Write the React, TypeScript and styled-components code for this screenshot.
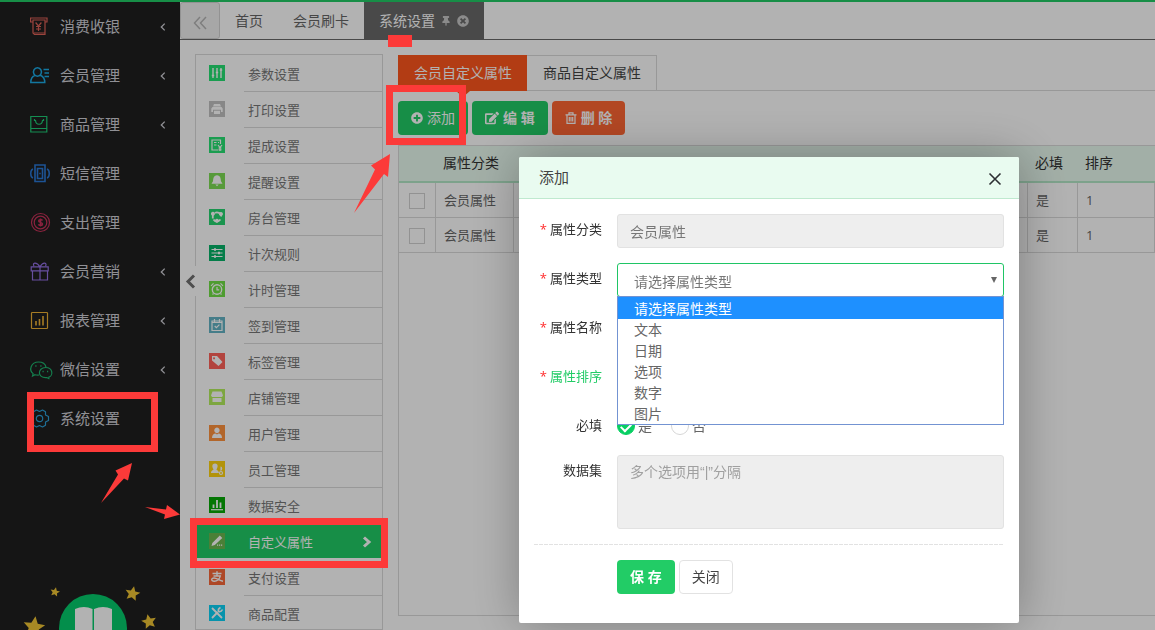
import React from 'react';
import styled, { createGlobalStyle, css } from 'styled-components';
import { FaPlusCircle, FaEdit, FaTimesCircle, FaThumbtack } from 'react-icons/fa';

const green = '#22cc66';
const line = '#dadada';
const mark = '#fc3a39';

const GlobalStyle = createGlobalStyle`
  * { box-sizing: border-box; }
  body {
    margin: 0;
    background: #fff;
    color: #666;
    font-family: "Open Sans", "Noto Sans CJK SC", sans-serif;
    font-size: 14px;
    line-height: 20px;
    overflow: hidden;
  }
  button, input, select, textarea { font: inherit; color: inherit; margin: 0; }
  button { cursor: pointer; }
  a { color: inherit; text-decoration: none; }
  ul { list-style: none; margin: 0; padding: 0; }
`;

const Page = styled.div`
  display: flex;
  position: relative;
  height: 100vh;
  overflow: hidden;
  border-top: 2px solid ${green};
`;

/* ---------- primary sidebar ---------- */

const Sidebar = styled.nav`
  display: flex;
  flex-direction: column;
  flex: none;
  width: 180px;
  background: #1f1f1f;
  color: #cfcfd6;
`;

const SideLink = styled.a`
  display: flex;
  align-items: center;
  gap: 10px;
  height: 49px;
  padding: 0 14px 0 30px;
  font-size: 15px;
`;

const SideLabel = styled.span`
  flex: 1;
  padding-bottom: 2px;
`;

const SideIcon = styled.svg`
  width: 20px;
  height: 20px;
  flex: none;
  fill: none;
  stroke: currentColor;
  stroke-width: 1.2;
  overflow: visible;
`;

const Brand = styled.svg`
  display: block;
  width: 180px;
  height: 50px;
  margin-top: auto;
`;

/* ---------- workspace ---------- */

const Workspace = styled.div`
  display: flex;
  flex-direction: column;
  flex: 1;
  min-width: 0;
`;

const TabBar = styled.div`
  display: flex;
  flex: none;
  height: 38px;
  border-bottom: 1px solid #696969;
`;

const CollapseButton = styled.button`
  display: flex;
  align-items: center;
  justify-content: center;
  width: 40px;
  padding: 4px 0 0;
  border: 1px solid #d2d2d2;
  border-radius: 3px;
  background: #f0f0f0;
  color: #b5b5b5;
`;

const PageTab = styled.a<{ $active?: boolean }>`
  display: flex;
  align-items: center;
  padding: 0 15px;
  ${(p) => p.$active && css`background: #696969; color: #fff;`}
`;

const TabTools = styled.span`
  display: flex;
  align-items: center;
  gap: 6px;
  margin-left: 6px;
  color: #c8c8c8;
`;

const Content = styled.div`
  display: flex;
  flex: 1;
  min-height: 0;
  padding: 14px 0 0 15px;
  position: relative;
`;

const Handle = styled.button`
  position: absolute;
  left: 5px;
  top: 226px;
  width: 12px;
  height: 30px;
  padding: 0;
  border: 0;
  background: #fff;
  color: #707070;
  display: flex;
  align-items: center;
  justify-content: center;
`;

const Menu = styled.ul`
  flex: none;
  width: 188px;
  padding-top: 1px;
  border: 1px solid ${line};
  font-size: 13px;
  color: #777;
`;

const MenuLink = styled.a<{ $active?: boolean }>`
  display: flex;
  align-items: center;
  height: 36px;
  padding-left: 13px;
  ${(p) => p.$active && css`
    background: ${green};
    color: #fff;
    box-shadow: inset 0 -2px #fff;
  `}
`;

const MenuText = styled.span<{ $active?: boolean }>`
  display: flex;
  align-items: center;
  justify-content: space-between;
  flex: 1;
  height: 36px;
  margin-left: 19px;
  padding: 1px 10px 0 4px;
  border-bottom: 1px solid ${(p) => (p.$active ? '#fff' : line)};
`;

const MenuIcon = styled.svg<{ $tone: string }>`
  width: 16px;
  height: 16px;
  flex: none;
  margin-bottom: 2px;
  background: ${(p) => p.$tone};
  fill: none;
  stroke: #fff;
  stroke-width: 1.2;
`;

const Main = styled.main`
  display: flex;
  flex-direction: column;
  flex: 1;
  min-width: 0;
  margin: 1px 0 14px 15px;
`;

const SubTabs = styled.div`
  display: flex;
  flex: none;
  height: 36px;
  border-bottom: 1px solid ${line};
`;

const SubTab = styled.a<{ $active?: boolean }>`
  position: relative;
  display: flex;
  align-items: center;
  padding: 0 15px 0 16px;
  color: #444;
  border: solid ${line};
  border-width: 1px 1px 0 0;
  ${(p) => p.$active && css`
    margin-bottom: -1px;
    border: 0;
    background: #ff571d;
    color: #fff;
    &::after {
      content: '';
      position: absolute;
      top: 100%;
      left: calc(50% - 7px);
      border: solid transparent;
      border-width: 6px 7px 0;
      border-top-color: #ff571d;
    }
  `}
`;

const Toolbar = styled.div`
  display: flex;
  flex: none;
  gap: 4px;
  padding: 10px 0;
`;

const Button = styled.button<{ $kind?: 'primary' | 'danger' | 'plain'; $bold?: boolean }>`
  display: inline-flex;
  align-items: center;
  justify-content: center;
  gap: 4px;
  height: 34px;
  padding: 0 13px;
  border: 0;
  border-radius: 4px;
  white-space: nowrap;
  font-weight: ${(p) => (p.$bold ? 700 : 400)};
  color: #fff;
  background: ${(p) => (p.$kind === 'danger' ? '#ff6633' : green)};
  ${(p) => p.$kind === 'plain' && css`
    padding: 0 12px;
    background: #fff;
    border: 1px solid #e2e2e2;
    color: #444;
    font-weight: 400;
  `}
`;

const TableBox = styled.div`
  flex: 1;
  min-height: 0;
  border: solid ${line};
  border-width: 1px 0 1px 1px;
`;

const Table = styled.table`
  width: 100%;
  table-layout: fixed;
  border-collapse: separate;
  border-spacing: 0;
  th, td { padding: 0 7px; text-align: left; }
  th {
    height: 37px;
    padding-bottom: 2px;
    background: #e9fbf0;
    border-bottom: 2px solid #b4e8c8;
    color: #333;
    font-weight: 400;
  }
  td {
    height: 35px;
    padding-left: 8px;
    border: solid ${line};
    border-width: 0 1px 1px 0;
    font-size: 13px;
  }
`;

const RowCheck = styled.input`
  appearance: none;
  display: block;
  width: 16px;
  height: 16px;
  margin: 1px 0 0 2px;
  border: 1px solid #d2d2d2;
  background: #fff;
`;

/* ---------- dialog ---------- */

const Shade = styled.div`
  position: fixed;
  inset: 0;
  display: flex;
  justify-content: center;
  align-items: flex-start;
  padding: 157px 0 0 383px;
  background: rgba(0, 0, 0, 0.3);
`;

const Dialog = styled.section`
  width: 500px;
  background: #fff;
  border-radius: 2px;
  box-shadow: 1px 1px 50px rgba(0, 0, 0, 0.3);
`;

const DialogHead = styled.header`
  display: flex;
  align-items: center;
  justify-content: space-between;
  height: 42px;
  padding: 0 17px 0 20px;
  border-bottom: 1px solid #bfe9cf;
  background: #e9fbf0;
  border-radius: 2px 2px 0 0;
  color: #444;
`;

const DialogTitle = styled.h2`
  margin: 0;
  padding-bottom: 2px;
  font-size: 15px;
  font-weight: 400;
`;

const CloseButton = styled.button`
  display: flex;
  padding: 3px 0 0;
  border: 0;
  background: none;
  color: #2d2f33;
`;

const Form = styled.form`
  display: flex;
  flex-direction: column;
  gap: 15px;
  padding: 15px 15px 29px;
`;

const Row = styled.div`
  display: grid;
  grid-template-columns: 68px 1fr;
  column-gap: 15px;
  position: relative;
`;

const Label = styled.label<{ $accent?: boolean }>`
  line-height: 30px;
  font-size: 13px;
  text-align: right;
  white-space: nowrap;
  color: ${(p) => (p.$accent ? green : '#333')};
`;

const Star = styled.span`
  margin-right: 3px;
  color: #ff2a2a;
`;

const field = css`
  width: 100%;
  height: 34px;
  border: 1px solid #e2e2e2;
  border-radius: 3px;
  padding: 0 12px;
  background: #fff;
  color: #777;
  outline: 0;
`;

const TextInput = styled.input`
  ${field}
  &:disabled { background: #eee; color: #777; }
`;

const TextArea = styled.textarea`
  ${field}
  display: block;
  height: 74px;
  padding: 6px 12px;
  background: #eee;
  font-family: "Liberation Sans", "Noto Sans CJK SC", sans-serif;
  resize: none;
  &::placeholder { color: #a0a0a0; opacity: 1; }
`;

const SelectBox = styled.div`
  position: relative;
`;

const Select = styled.select`
  ${field}
  appearance: none;
  display: block;
  padding: 3px 16px 0;
  border-color: #1fc565;
`;

const Arrow = styled.svg`
  position: absolute;
  right: 7px;
  top: 14px;
  fill: #666;
  pointer-events: none;
`;

const Options = styled.ul`
  position: absolute;
  z-index: 2;
  top: 33px;
  left: 0;
  right: 0;
  border: 1px solid #7393d2;
  background: #fff;
`;

const Option = styled.li<{ $active?: boolean }>`
  padding: 0 16px;
  line-height: 21px;
  ${(p) => p.$active && css`
    padding-top: 1px;
    background: #1e90ff;
    color: #fff;
  `}
`;

const Radios = styled.div`
  display: flex;
  align-items: center;
  gap: 19px;
  height: 30px;
`;

const RadioLabel = styled.label`
  display: flex;
  align-items: center;
  gap: 3px;
  padding-top: 2px;
`;

const Radio = styled.input`
  appearance: none;
  width: 18px;
  height: 18px;
  border: 1px solid #d6d6d6;
  border-radius: 50%;
  display: grid;
  place-items: center;
  &:checked { background: #08cf63; border-color: #08cf63; }
  &:checked::before {
    content: '';
    width: 8px;
    height: 5px;
    border: solid #fff;
    border-width: 0 0 2px 2px;
    rotate: -45deg;
  }
`;

const Divider = styled.hr`
  width: 100%;
  height: 1px;
  margin: 0;
  border: 0;
  background: repeating-linear-gradient(90deg, #e2e2e2 0 4px, transparent 4px 5px);
`;

const Actions = styled.div`
  display: flex;
  gap: 4px;
  padding-left: 83px;
`;

/* ---------- guide marks over the page ---------- */

const Frame = styled.div<{ $x: number; $y: number; $w: number; $h: number; $solid?: boolean }>`
  position: fixed;
  left: ${(p) => p.$x}px;
  top: ${(p) => p.$y}px;
  width: ${(p) => p.$w}px;
  height: ${(p) => p.$h}px;
  border: ${(p) => (p.$solid ? 0 : 7)}px solid ${mark};
  background: ${(p) => (p.$solid ? mark : 'transparent')};
  pointer-events: none;
`;

const Arrows = styled.svg`
  position: fixed;
  left: 0;
  top: 0;
  width: 400px;
  height: 530px;
  fill: ${mark};
  pointer-events: none;
`;

type Entry = { label: string; tone: string; icon: React.ReactNode; more?: boolean };

const sections: Entry[] = [
  { label: '消费收银', tone: '#df6258', more: true, icon: <><path d="M3 5H.6V1H17v4h-2.4M3 3h12v14.5H4.500L3 16z" /><path d="M5.600 5.500 8.500 9l2.900-3.500M8.500 9v5M6 9.500h5M6 12h5" /><path d="M4 16h11" strokeWidth="2" opacity=".5" /></> },
  { label: '会员管理', tone: '#1cabe6', more: true, icon: <path strokeWidth="1.500" d="M7.500 1.800a4 4.200 0 1 1-.1 0zM5 9.300C2 10.500 .8 13 .8 16.500h14c0-3.500-1.500-6-4.500-7.200M13.500 3.500h5.500M14.500 7h4.500M14.500 10.500h4.500" /> },
  { label: '商品管理', tone: '#1fcc76', more: true, icon: <path d="M.8 1.500h16v15.500h-16zM.8 13.500h16M4.500 4v1.500h1C6 10.500 12 10.500 12.500 5.500h1V4" /> },
  { label: '短信管理', tone: '#2a78d6', icon: <><path strokeWidth="1.600" d="M5 1h10v16.500H5zM7.500 4.500h5v10h-5z" /><path strokeWidth="1.500" d="M3 5C0 6 0 13 3 14M17 5c3 1 3 8 0 9M9.300 9.500h1.400" /></> },
  { label: '支出管理', tone: '#c8325a', icon: <><circle cx="10.500" cy="9.500" r="9" /><circle cx="10.500" cy="9.500" r="6.300" /><path strokeWidth="1.500" d="M12.500 7.500C12 6 8.700 6 8.700 8c0 1.700 3.800 1 3.800 3 0 2-3.500 2-4 .3M10.500 5.500v8" /></> },
  { label: '会员营销', tone: '#9471e6', more: true, icon: <path d="M1.200 4.800h17v4h-17zM2.500 8.800V18h15V8.800M10 4.800v13.200M10 4.800C6-1 2 1 4 4M10 4.800C13.500-1 17.500 1 15.500 4" /> },
  { label: '报表管理', tone: '#eeb234', more: true, icon: <><rect x="1.500" y="1.500" width="16" height="16" rx=".8" /><path strokeWidth="1.600" d="M6 10v4.500M9.500 8v6.500M13 5v9.500" /></> },
  { label: '微信设置', tone: '#1eb770', more: true, icon: <><path d="M9 15c-1.500.3-3 0-4-.3L2.500 16l.6-2.400C-1.500 10 1 2 8.500 2c4 0 6.800 2 7.500 5" /><path d="M15.500 7.500c8 0 7.500 8.500 3.500 9.500l-.2 1.500-2-1c-10 1-9.300-10-1.300-10z" /><path strokeWidth="1.500" d="M5.300 6h1.200M10.300 6h1.200M12.500 11.500h1.200M17 11.500h1.200" /></> },
  { label: '系统设置', tone: '#2c9fd8', icon: <><path d="M6.500 1l3 1.500 3-1.500 3 1.800V6l3 1.500v4L15.500 13v3.200L12.500 18l-3-1.500-3 1.500-3-1.800V13L1 11.500v-4L3.500 6V2.800z" strokeLinejoin="round" /><circle cx="9.500" cy="9.500" r="3.200" /></> },
];

const settings: Entry[] = [
  { label: '参数设置', tone: '#26e173', icon: <path strokeWidth="1.400" d="M4 3v10M8 3v10M12 3v10M2.800 10.500h2.400M6.800 7.500h2.400M10.800 5h2.400" /> },
  { label: '打印设置', tone: '#c2c2c2', icon: <path fill="#fff" stroke="none" fillRule="evenodd" d="M5 3h6l1 2.500H4zM3.500 6h9l1.200 1.500V11H12V8.800H4V11H2.300V7.500zM5 9.800h6v3.200H5z" /> },
  { label: '提成设置', tone: '#26e173', icon: <><path d="M9 13H3V3h8.500v4M5 5.500h2.500M5 8h2.500M9 5.500h1" /><path d="M9 8l2 2.500L13 8M11 10.500V14M9.500 11h3M9.500 12.800h3" /></> },
  { label: '提醒设置', tone: '#7ddd53', icon: <path fill="#fff" stroke="none" d="M8 2.200c3.500.5 3.700 3 4 6l1.500 2.500h-11L4 8.200c.3-3 .5-5.500 4-6zM6.300 11.500h3.400L8 13.300z" /> },
  { label: '房台管理', tone: '#26d470', icon: <><path strokeWidth="1.800" d="M6 4C8 2.500 12.500 4 12 7.500M11.500 10.500C9 13.500 6 13 4.500 10.500M3.800 9.500V6" /><path fill="#fff" stroke="none" d="M4 2.800a2 2 0 1 1-.1 0zM12 3a2 2 0 1 1-.1 0zM8 9.800a2 2 0 1 1-.1 0z" /></> },
  { label: '计次规则', tone: '#06b469', icon: <><path d="M2.500 4.500h11M2.500 8h11M2.500 11.500h11" /><path strokeWidth="2.600" d="M5 4.500h2M9 8h2M5 11.500h2" /></> },
  { label: '计时管理', tone: '#70e045', icon: <><circle cx="8" cy="8.500" r="4.700" strokeWidth="1.400" /><path d="M8 6V8.800h2.200M2 4.800l2.500-2.500M14 4.800l-2.500-2.500M4.500 12.500l-1 1M11.500 12.500l1 1" /></> },
  { label: '签到管理', tone: '#64b4c4', icon: <path d="M3 4h10v9.500H3zM3 5.500h10M5.500 2v3M10.500 2v3M5.700 9l1.700 1.700 3-3" /> },
  { label: '标签管理', tone: '#ff6259', icon: <path fill="#fff" stroke="none" fillRule="evenodd" d="M3 3h5l5.500 6-4 4L3 7.500zM5 4.300a1 1 0 1 0 .1 0z" /> },
  { label: '店铺管理', tone: '#b4ee5c', icon: <path fill="#fff" stroke="none" d="M3.500 2.500h9l1.500 4-1 1.500H3L2 6.500zM3.500 9h9v4h-9z" /> },
  { label: '用户管理', tone: '#ff923e', icon: <path fill="#fff" stroke="none" d="M8 2.500a2.700 2.900 0 1 1-.1 0zM3 13c0-3 1.500-4.500 3.500-4.500l1.500 1 1.500-1c2 0 3.500 1.500 3.500 4.500z" /> },
  { label: '员工管理', tone: '#ffd310', icon: <><path fill="#fff" stroke="none" d="M6 2.500c3.500 0 3 4 1.500 5.700 0 1.300 2.300 1 2.500 3.800H2c0-2.800 2.200-2.500 2.500-3.800C3 6.500 2.500 2.500 6 2.500zM11.500 5.500a1.800 2.200 0 1 1-.1 4.400z" /><circle cx="12" cy="12" r="1.500" /></> },
  { label: '数据安全', tone: '#07aa07', icon: <><path d="M2 12.700h12" /><path strokeWidth="1.800" d="M4.500 7.500V11M8 3v8M11.500 5.500V11" /></> },
  { label: '自定义属性', tone: '#6cb850', icon: <path fill="#fff" stroke="none" d="M10.800 2.500l2.500 2.500-7.500 7L2.500 13l.8-3zM8 11.500h1.200v1.200H8zM10 11.500h1.200v1.200H10zM12 11.500h1.200v1.200H12z" /> },
  { label: '支付设置', tone: '#fa6838', icon: <path strokeWidth="1.400" d="M3.500 4.500h9M8 2.300V7M4.500 7h6.800c-.5 3-3.300 5.200-6 5.200C1.800 12.200 2 9 5 9c3 0 5 2.500 9 3.300" /> },
  { label: '商品配置', tone: '#0bd3f6', icon: <><path strokeWidth="1.800" d="M3 3l10 10M8.800 7L3 13" /><path strokeWidth="1.600" d="M11.500 2.500C9.500 3.500 9 5 9.500 6.500c1.500.5 3 0 4-2" /></> },
];

const records = [
  { id: 1, kind: '会员属性', required: '是', order: 1 },
  { id: 2, kind: '会员属性', required: '是', order: 1 },
];

const types = ['请选择属性类型', '文本', '日期', '选项', '数字', '图片'];

const starShape = 'M0-10 3-3.500 10-3 4.700 1.600 6.200 8.500 0 5-6.200 8.500-4.700 1.600-10-3-3-3.500z';

function Chevron({ width, height, weight, right }: { width: number; height: number; weight: number; right?: boolean }) {
  const tip = right ? width - weight : weight;
  const end = right ? weight : width - weight;
  return (
    <svg width={width} height={height} fill="none" stroke="currentColor" strokeWidth={weight} aria-hidden>
      <path d={`M${end} ${weight / 2}L${tip} ${height / 2}L${end} ${height - weight / 2}`} />
    </svg>
  );
}

function BrandArt() {
  return (
    <Brand viewBox="0 580 180 50" aria-hidden>
      <circle cx="93" cy="628" r="34" fill="#05cc6c" />
      <path fill="#fff" d="M75 609q9-4 17.500 0v24H75zM94 609q9-4 18 0v24H94z" />
      <g fill="#f0c534">
        <path d={starShape} transform="translate(55 592) scale(.48) rotate(12)" />
        <path d={starShape} transform="translate(132.500 593.500) scale(.75) rotate(12)" />
        <path d={starShape} transform="translate(34 627) scale(1.080) rotate(8)" />
        <path d={starShape} transform="translate(149 621.500) scale(.75) rotate(-12)" />
      </g>
    </Brand>
  );
}

function AddDialog() {
  return (
    <Dialog role="dialog" aria-labelledby="dialog-title">
      <DialogHead>
        <DialogTitle id="dialog-title">添加</DialogTitle>
        <CloseButton type="button" aria-label="关闭">
          <svg width="14" height="14" viewBox="0 0 14 14" stroke="currentColor" strokeWidth="1.600"><path d="M1.500 1.500l11 11M12.500 1.500l-11 11" /></svg>
        </CloseButton>
      </DialogHead>
      <Form onSubmit={(e) => e.preventDefault()}>
        <Row>
          <Label htmlFor="kind"><Star>*</Star>属性分类</Label>
          <TextInput id="kind" defaultValue="会员属性" disabled />
        </Row>
        <Row>
          <Label htmlFor="type"><Star>*</Star>属性类型</Label>
          <SelectBox>
            <Select id="type" defaultValue={types[0]}>
              {types.map((t) => <option key={t}>{t}</option>)}
            </Select>
            <Arrow width="6" height="6" viewBox="0 0 6 6"><path d="M0 0h6L3 6z" /></Arrow>
            <Options role="listbox">
              {types.map((t, i) => (
                <Option key={t} role="option" aria-selected={i === 0} $active={i === 0}>{t}</Option>
              ))}
            </Options>
          </SelectBox>
        </Row>
        <Row>
          <Label htmlFor="name"><Star>*</Star>属性名称</Label>
          <TextInput id="name" />
        </Row>
        <Row>
          <Label htmlFor="order" $accent><Star>*</Star>属性排序</Label>
          <TextInput id="order" />
        </Row>
        <Row>
          <Label as="span">必填</Label>
          <Radios role="radiogroup" aria-label="必填">
            <RadioLabel><Radio type="radio" name="required" defaultChecked />是</RadioLabel>
            <RadioLabel><Radio type="radio" name="required" />否</RadioLabel>
          </Radios>
        </Row>
        <Row>
          <Label htmlFor="data">数据集</Label>
          <TextArea id="data" placeholder="多个选项用“|”分隔" />
        </Row>
        <Divider />
        <Actions>
          <Button type="submit" $bold>保 存</Button>
          <Button type="button" $kind="plain">关闭</Button>
        </Actions>
      </Form>
    </Dialog>
  );
}

export default function App() {
  return (
    <>
      <GlobalStyle />
      <Page>
        <Sidebar>
          {sections.map((s) => (
            <SideLink key={s.label} href="#">
              <SideIcon viewBox="0 0 20 20" style={{ color: s.tone }}>{s.icon}</SideIcon>
              <SideLabel>{s.label}</SideLabel>
              {s.more && <Chevron width={6} height={8} weight={1.3} />}
            </SideLink>
          ))}
          <BrandArt />
        </Sidebar>
        <Workspace>
          <TabBar>
            <CollapseButton type="button" aria-label="收起">
              <svg width="14" height="14" viewBox="0 0 14 14" fill="none" stroke="currentColor" strokeWidth="1.500"><path d="M7 1L1.500 7 7 13M13 1L7.500 7l5.500 6" /></svg>
            </CollapseButton>
            <PageTab href="#">首页</PageTab>
            <PageTab href="#">会员刷卡</PageTab>
            <PageTab href="#" $active>
              系统设置
              <TabTools><FaThumbtack size={10} /><FaTimesCircle size={12} /></TabTools>
            </PageTab>
          </TabBar>
          <Content>
            <Menu>
              {settings.map((s) => {
                const active = s.label === '自定义属性';
                return (
                  <li key={s.label}>
                    <MenuLink href="#" $active={active}>
                      <MenuIcon viewBox="0 0 16 16" $tone={s.tone}>{s.icon}</MenuIcon>
                      <MenuText $active={active}>{s.label}{active && <Chevron width={11} height={12} weight={3} right />}</MenuText>
                    </MenuLink>
                  </li>
                );
              })}
            </Menu>
            <Handle type="button" aria-label="折叠菜单"><Chevron width={12} height={15} weight={3} /></Handle>
            <Main>
              <SubTabs>
                <SubTab href="#" $active>会员自定义属性</SubTab>
                <SubTab href="#">商品自定义属性</SubTab>
              </SubTabs>
              <Toolbar>
                <Button type="button"><FaPlusCircle size={12} />添加</Button>
                <Button type="button" $bold><FaEdit size={14} />编 辑</Button>
                <Button type="button" $kind="danger" $bold>
                  <svg width="12" height="12" viewBox="0 0 12 12" fill="none" stroke="currentColor" strokeWidth="1.200"><path d="M.5 2.800h11M4 2.500V.8h4v1.700M2 3v8.300h8V3M4.300 5v4.500M6 5v4.500M7.700 5v4.500" /></svg>
                  删 除
                </Button>
              </Toolbar>
              <TableBox>
                <Table>
                  <colgroup>
                    <col style={{ width: 37 }} /><col style={{ width: 78 }} /><col />
                    <col style={{ width: 50 }} /><col style={{ width: 77 }} />
                  </colgroup>
                  <thead>
                    <tr><th /><th>属性分类</th><th /><th>必填</th><th>排序</th></tr>
                  </thead>
                  <tbody>
                    {records.map((r) => (
                      <tr key={r.id}>
                        <td><RowCheck type="checkbox" aria-label="选择" /></td>
                        <td>{r.kind}</td><td /><td>{r.required}</td><td>{r.order}</td>
                      </tr>
                    ))}
                  </tbody>
                </Table>
              </TableBox>
            </Main>
          </Content>
        </Workspace>
      </Page>
      <Shade><AddDialog /></Shade>
      <Frame $x={27} $y={392} $w={131} $h={60} />
      <Frame $x={190} $y={518} $w={198} $h={50} />
      <Frame $x={386} $y={85} $w={80} $h={60} />
      <Frame $x={388} $y={35} $w={24} $h={12} $solid />
      <Arrows viewBox="0 0 400 530" aria-hidden>
        <path d="M101 503L118 474.500l-2.500-4L132 463l-4 17.500-4-2zM145 507l21 2.500 1-4.500 13 9.500-16 4.500 1-4.500zM354 213L375 169.500l-4-4L390 154l-2 23-4-3z" />
      </Arrows>
    </>
  );
}
